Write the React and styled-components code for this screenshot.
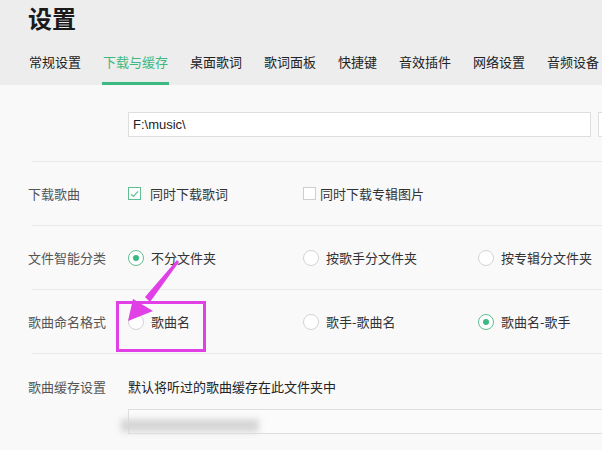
import React from 'react';
import styled, { createGlobalStyle } from 'styled-components';

const GlobalStyle = createGlobalStyle`
  html, body {
    margin: 0;
    padding: 0;
    background: #f9f9f9;
  }
  body {
    font-family: "Noto Sans CJK SC", "Liberation Sans", sans-serif;
    width: 602px;
    height: 450px;
    overflow: hidden;
  }
`;

const Page = styled.div`
  position: relative;
  width: 602px;
  height: 450px;
  overflow: hidden;
  background: #f9f9f9;
`;

const Header = styled.div`
  background: #ededed;
  padding: 0 0 0 28px;
  height: 85px;
  display: flex;
  flex-direction: column;
`;

const Title = styled.h1`
  margin: 0;
  padding-top: 2px;
  font-size: 24px;
  line-height: 32px;
  font-weight: bold;
  color: #1a1a1a;
`;

const TabBar = styled.div`
  display: flex;
  gap: 22px;
  margin-top: auto;
  padding-left: 1px;
  white-space: nowrap;
`;

const Tab = styled.div`
  font-size: 13px;
  line-height: 18px;
  padding: 9px ${props => (props.active ? '1px' : '0')} 11px;
  margin: 0 ${props => (props.active ? '-1px' : '0')};
  color: ${props => (props.active ? '#3cb882' : '#222')};
  border-bottom: 3px solid ${props => (props.active ? '#3cb882' : 'transparent')};
`;

const Content = styled.div`
  padding-left: 28px;
`;

const PathRow = styled.div`
  display: flex;
  gap: 7px;
  padding: 27px 0 24px 100px;
`;

const PathInput = styled.div`
  flex: none;
  width: ${props => props.width}px;
  height: 23px;
  border: 1px solid #dedede;
  background: #fff;
  font-family: "Liberation Sans", "Noto Sans CJK SC", sans-serif;
  font-size: 13px;
  line-height: 23px;
  color: #222;
  padding-left: 4px;
  display: flex;
  align-items: center;
`;

const Row = styled.div`
  display: flex;
  align-items: center;
  height: 63px;
  border-top: 1px solid #e8e8e8;
  margin-left: 4px;
`;

const Label = styled.div`
  flex: none;
  width: 100px;
  margin-left: -4px;
  font-size: 13px;
  color: #555;
  white-space: nowrap;
`;

const Options = styled.div`
  display: grid;
  grid-template-columns: 175px 175px 175px;
`;

const Option = styled.div`
  display: flex;
  align-items: center;
  gap: ${props => props.gap}px;
  font-size: 13px;
  color: #333;
  white-space: nowrap;
`;

const Checkbox = styled.span`
  flex: none;
  width: 11px;
  height: 11px;
  border: 1px solid ${props => (props.checked ? '#5fbf90' : '#cfcfcf')};
  background: #fff;
  display: inline-flex;
  align-items: center;
  justify-content: center;
`;

const Radio = styled.span`
  flex: none;
  width: 14px;
  height: 14px;
  border-radius: 50%;
  border: 1px solid ${props => (props.checked ? '#5fbf90' : '#d4d4d4')};
  background: #fff;
  display: inline-flex;
  align-items: center;
  justify-content: center;

  &::after {
    content: '';
    width: 6px;
    height: 6px;
    border-radius: 50%;
    background: ${props => (props.checked ? '#3cb882' : 'transparent')};
  }
`;

const CacheRow = styled.div`
  border-top: 1px solid #e8e8e8;
  margin-left: 4px;
  padding-top: 23px;
`;

const CacheHead = styled.div`
  display: flex;
  align-items: center;
  height: 18px;
`;

const CacheText = styled.div`
  font-size: 13px;
  color: #222;
  white-space: nowrap;
`;

const CacheInput = styled.div`
  margin: 14px 0 0 96px;
  height: 23px;
  border: 1px solid #dedede;
  background: #fbfbfb;
  width: 480px;
  position: relative;
`;

const Blur = styled.span`
  position: absolute;
  left: -8px;
  top: 9px;
  width: 138px;
  height: 13px;
  background: #d6d6d6;
  filter: blur(3px);
`;

const Highlight = styled.div`
  position: absolute;
  left: 116px;
  top: 301px;
  width: 84px;
  height: 45px;
  border: 3px solid #e040e6;
`;

const Arrow = styled.svg`
  position: absolute;
  left: 0;
  top: 0;
  pointer-events: none;
`;

function CheckMark() {
  return (
    <svg width="9" height="8" viewBox="0 0 9 8">
      <path d="M1 4.2 L3.4 6.4 L8 1.4" fill="none" stroke="#5fbf90" strokeWidth="1.2" />
    </svg>
  );
}

const tabs = ['常规设置', '下载与缓存', '桌面歌词', '歌词面板', '快捷键', '音效插件', '网络设置', '音频设备'];

const rows = [
  {
    label: '下载歌曲',
    type: 'checkbox',
    options: [
      { text: '同时下载歌词', checked: true, gap: 9 },
      { text: '同时下载专辑图片', checked: false, gap: 4 },
    ],
  },
  {
    label: '文件智能分类',
    type: 'radio',
    options: [
      { text: '不分文件夹', checked: true, gap: 7 },
      { text: '按歌手分文件夹', checked: false, gap: 7 },
      { text: '按专辑分文件夹', checked: false, gap: 7 },
    ],
  },
  {
    label: '歌曲命名格式',
    type: 'radio',
    options: [
      { text: '歌曲名', checked: false, gap: 7 },
      { text: '歌手-歌曲名', checked: false, gap: 7 },
      { text: '歌曲名-歌手', checked: true, gap: 7 },
    ],
  },
];

export default function App() {
  return (
    <Page>
      <GlobalStyle />
      <Header>
        <Title>设置</Title>
        <TabBar>
          {tabs.map((t, i) => (
            <Tab key={t} active={i === 1}>{t}</Tab>
          ))}
        </TabBar>
      </Header>
      <Content>
        <PathRow>
          <PathInput width={457}>F:\music\</PathInput>
          <PathInput width={40} />
        </PathRow>
        {rows.map(row => (
          <Row key={row.label}>
            <Label>{row.label}</Label>
            <Options>
              {row.options.map(opt => (
                <Option key={opt.text} gap={opt.gap}>
                  {row.type === 'radio' ? (
                    <Radio checked={opt.checked} />
                  ) : (
                    <Checkbox checked={opt.checked}>{opt.checked && <CheckMark />}</Checkbox>
                  )}
                  {opt.text}
                </Option>
              ))}
            </Options>
          </Row>
        ))}
        <CacheRow>
          <CacheHead>
            <Label>歌曲缓存设置</Label>
            <CacheText>默认将听过的歌曲缓存在此文件夹中</CacheText>
          </CacheHead>
          <CacheInput>
            <Blur />
          </CacheInput>
        </CacheRow>
      </Content>
      <Highlight />
      <Arrow width="602" height="450" viewBox="0 0 602 450">
        <path d="M179 262 L150 302 L145 297 L177 260 Z" fill="#e040e6" />
        <path d="M128 321 L133 299 L153 311 Z" fill="#e040e6" />
      </Arrow>
    </Page>
  );
}
